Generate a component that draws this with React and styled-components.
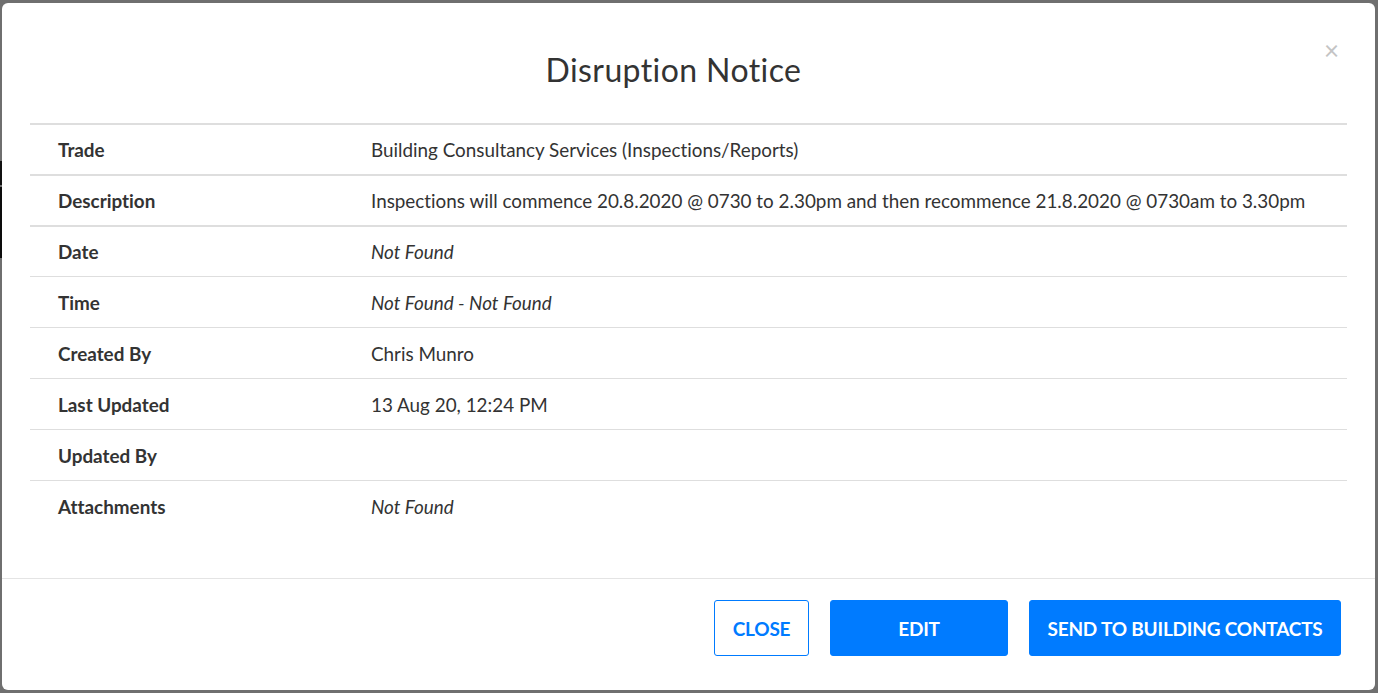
import React from "react";
import styled, { createGlobalStyle } from "styled-components";

const GlobalStyle = createGlobalStyle`
  html, body {
    margin: 0;
    padding: 0;
    background: #6f6f6f;
    font-family: Lato, "Open Sans", sans-serif;
    font-variant-ligatures: none;
  }
`;

const Backdrop = styled.div`
  width: 1378px;
  height: 693px;
  box-sizing: border-box;
  padding: 3px 3px 3px 2px;
  display: flex;
  background:
    linear-gradient(
        to bottom,
        transparent 0,
        transparent 161px,
        #111 161px,
        #111 185px,
        transparent 185px,
        transparent 187px,
        #0c0c0c 187px,
        #0c0c0c 258px,
        transparent 258px
      )
      left top / 2px 100% no-repeat,
    #6f6f6f;
`;

const Modal = styled.div`
  flex: 1;
  display: flex;
  flex-direction: column;
  background: #fff;
  border-radius: 6px;
  overflow: hidden;
`;

const Header = styled.header`
  display: flex;
  align-items: flex-start;
  height: 120px;
  box-sizing: border-box;
  padding: 0 36px 0 28px;
`;

const Title = styled.h1`
  flex: 1;
  margin: 51px 0 0;
  padding-right: 7px;
  text-align: center;
  font-family: Lato, sans-serif;
  font-weight: 400;
  font-size: 32px;
  letter-spacing: 0.4px;
  line-height: 1;
  color: #333;
`;

const CloseX = styled.button`
  margin-top: 34px;
  border: 0;
  background: none;
  padding: 0;
  font-family: Lato, sans-serif;
  font-size: 26px;
  line-height: 1;
  color: #c4c4c4;
  cursor: pointer;
`;

const Body = styled.div`
  flex: 1;
  padding: 0 28px;
`;

const Table = styled.div`
  display: flex;
  flex-direction: column;
`;

const Row = styled.div`
  display: grid;
  grid-template-columns: 341px 1fr;
  align-items: center;
  box-sizing: border-box;
  height: 51px;
  border-top: ${(p) => (p.$strong ? "2px" : "1px")} solid #dedede;
  font-size: 18.85px;
  color: #333;
`;

const Label = styled.div`
  padding-left: 28px;
  font-weight: 700;
`;

const Value = styled.div`
  font-style: ${(p) => (p.$empty ? "italic" : "normal")};
`;

const Footer = styled.footer`
  display: flex;
  justify-content: flex-end;
  align-items: flex-start;
  gap: 21px;
  height: 112px;
  box-sizing: border-box;
  padding: 21px 34px 0 0;
  border-top: 1px solid #e4e4e4;
`;

const Button = styled.button`
  height: 56px;
  padding: 0 12px;
  min-width: ${(p) => p.$width || "auto"};
  border-radius: 3px;
  font-family: Lato, sans-serif;
  font-weight: 700;
  font-size: 19px;
  text-transform: uppercase;
  letter-spacing: -0.2px;
  cursor: pointer;
  border: 1px solid #007bff;
  background: ${(p) => (p.$outline ? "#fff" : "#007bff")};
  color: ${(p) => (p.$outline ? "#007bff" : "#fff")};
`;

const rows = [
  { label: "Trade", value: "Building Consultancy Services (Inspections/Reports)", strong: true },
  {
    label: "Description",
    value:
      "Inspections will commence 20.8.2020 @ 0730 to 2.30pm and then recommence 21.8.2020 @ 0730am to 3.30pm",
    strong: true,
  },
  { label: "Date", value: "Not Found", empty: true, strong: true },
  { label: "Time", value: "Not Found - Not Found", empty: true },
  { label: "Created By", value: "Chris Munro" },
  { label: "Last Updated", value: "13 Aug 20, 12:24 PM" },
  { label: "Updated By", value: "" },
  { label: "Attachments", value: "Not Found", empty: true },
];

export default function App() {
  return (
    <>
      <GlobalStyle />
      <Backdrop>
        <Modal>
          <Header>
            <Title>Disruption Notice</Title>
            <CloseX aria-label="Close">×</CloseX>
          </Header>
          <Body>
            <Table>
              {rows.map((r) => (
                <Row key={r.label} $strong={r.strong}>
                  <Label>{r.label}</Label>
                  <Value $empty={r.empty}>{r.value}</Value>
                </Row>
              ))}
            </Table>
          </Body>
          <Footer>
            <Button $outline $width="95px">Close</Button>
            <Button $width="178px">Edit</Button>
            <Button $width="312px">Send to Building Contacts</Button>
          </Footer>
        </Modal>
      </Backdrop>
    </>
  );
}
